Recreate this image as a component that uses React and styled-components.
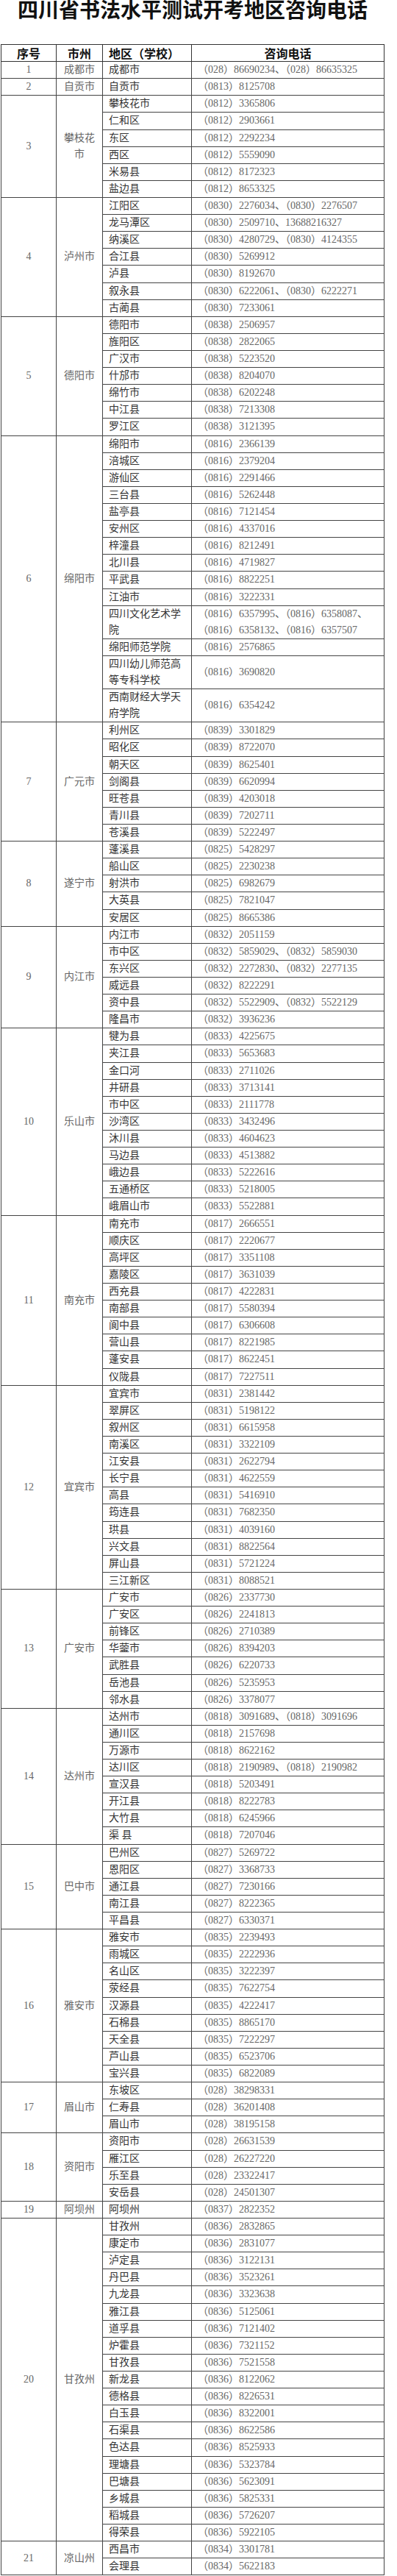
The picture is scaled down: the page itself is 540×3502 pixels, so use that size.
import styled, { createGlobalStyle } from "styled-components";

const GlobalStyle = createGlobalStyle`
  body {
    margin: 0;
    background: #fff;
  }
`;

const Page = styled.div`
  width: 522px;
  padding-left: 1px;
`;

const Title = styled.h1`
  margin: 0 0 35px;
  font-family: "Noto Sans CJK SC", sans-serif;
  font-size: 28px;
  line-height: 25px;
  font-weight: 700;
  color: #111;
  text-align: center;
  letter-spacing: 0;
`;

const Table = styled.table`
  width: 521px;
  border-collapse: collapse;
  table-layout: fixed;
`;

const HeadCell = styled.th`
  border: 1px solid #333;
  padding: 0 8px;
  font-family: "Noto Sans CJK SC", sans-serif;
  font-size: 16px;
  line-height: 22.11px;
  font-weight: 700;
  color: #111;
  text-align: ${(p) => (p.$left ? "left" : "center")};
`;

const Cell = styled.td`
  border: 1px solid #444;
  padding: 0 ${(p) => (p.$narrow ? "6px" : "8px")};
  font-family: "Liberation Serif", "Noto Sans CJK SC", serif;
  font-size: 14px;
  line-height: 22.11px;
  color: ${(p) => (p.$dark ? "#333" : "#666")};
  text-align: ${(p) => (p.$center ? "center" : "left")};
  vertical-align: middle;
  word-break: normal;
`;

const regions = [
  { no: 1, city: "成都市", rows: [["成都市", "（028）86690234、（028）86635325"]] },
  { no: 2, city: "自贡市", code: "0813", rows: [["自贡市", "8125708"]] },
  {
    no: 3,
    city: "攀枝花市",
    code: "0812",
    rows: [
      ["攀枝花市", "3365806"],
      ["仁和区", "2903661"],
      ["东区", "2292234"],
      ["西区", "5559090"],
      ["米易县", "8172323"],
      ["盐边县", "8653325"],
    ],
  },
  {
    no: 4,
    city: "泸州市",
    code: "0830",
    rows: [
      ["江阳区", "（0830）2276034、（0830）2276507"],
      ["龙马潭区", "（0830）2509710、13688216327"],
      ["纳溪区", "（0830）4280729、（0830）4124355"],
      ["合江县", "5269912"],
      ["泸县", "8192670"],
      ["叙永县", "（0830）6222061、（0830）6222271"],
      ["古蔺县", "7233061"],
    ],
  },
  {
    no: 5,
    city: "德阳市",
    code: "0838",
    rows: [
      ["德阳市", "2506957"],
      ["旌阳区", "2822065"],
      ["广汉市", "5223520"],
      ["什邡市", "8204070"],
      ["绵竹市", "6202248"],
      ["中江县", "7213308"],
      ["罗江区", "3121395"],
    ],
  },
  {
    no: 6,
    city: "绵阳市",
    code: "0816",
    rows: [
      ["绵阳市", "2366139"],
      ["涪城区", "2379204"],
      ["游仙区", "2291466"],
      ["三台县", "5262448"],
      ["盐亭县", "7121454"],
      ["安州区", "4337016"],
      ["梓潼县", "8212491"],
      ["北川县", "4719827"],
      ["平武县", "8822251"],
      ["江油市", "3222331"],
      ["四川文化艺术学院", "（0816）6357995、（0816）6358087、（0816）6358132、（0816）6357507"],
      ["绵阳师范学院", "2576865"],
      ["四川幼儿师范高等专科学校", "3690820"],
      ["西南财经大学天府学院", "6354242"],
    ],
  },
  {
    no: 7,
    city: "广元市",
    code: "0839",
    rows: [
      ["利州区", "3301829"],
      ["昭化区", "8722070"],
      ["朝天区", "8625401"],
      ["剑阁县", "6620994"],
      ["旺苍县", "4203018"],
      ["青川县", "7202711"],
      ["苍溪县", "5222497"],
    ],
  },
  {
    no: 8,
    city: "遂宁市",
    code: "0825",
    rows: [
      ["蓬溪县", "5428297"],
      ["船山区", "2230238"],
      ["射洪市", "6982679"],
      ["大英县", "7821047"],
      ["安居区", "8665386"],
    ],
  },
  {
    no: 9,
    city: "内江市",
    code: "0832",
    rows: [
      ["内江市", "2051159"],
      ["市中区", "（0832）5859029、（0832）5859030"],
      ["东兴区", "（0832）2272830、（0832）2277135"],
      ["威远县", "8222291"],
      ["资中县", "（0832）5522909、（0832）5522129"],
      ["隆昌市", "3936236"],
    ],
  },
  {
    no: 10,
    city: "乐山市",
    code: "0833",
    rows: [
      ["犍为县", "4225675"],
      ["夹江县", "5653683"],
      ["金口河", "2711026"],
      ["井研县", "3713141"],
      ["市中区", "2111778"],
      ["沙湾区", "3432496"],
      ["沐川县", "4604623"],
      ["马边县", "4513882"],
      ["峨边县", "5222616"],
      ["五通桥区", "5218005"],
      ["峨眉山市", "5522881"],
    ],
  },
  {
    no: 11,
    city: "南充市",
    code: "0817",
    rows: [
      ["南充市", "2666551"],
      ["顺庆区", "2220677"],
      ["高坪区", "3351108"],
      ["嘉陵区", "3631039"],
      ["西充县", "4222831"],
      ["南部县", "5580394"],
      ["阆中县", "6306608"],
      ["营山县", "8221985"],
      ["蓬安县", "8622451"],
      ["仪陇县", "7227511"],
    ],
  },
  {
    no: 12,
    city: "宜宾市",
    code: "0831",
    rows: [
      ["宜宾市", "2381442"],
      ["翠屏区", "5198122"],
      ["叙州区", "6615958"],
      ["南溪区", "3322109"],
      ["江安县", "2622794"],
      ["长宁县", "4622559"],
      ["高县", "5416910"],
      ["筠连县", "7682350"],
      ["珙县", "4039160"],
      ["兴文县", "8822564"],
      ["屏山县", "5721224"],
      ["三江新区", "8088521"],
    ],
  },
  {
    no: 13,
    city: "广安市",
    code: "0826",
    rows: [
      ["广安市", "2337730"],
      ["广安区", "2241813"],
      ["前锋区", "2710389"],
      ["华蓥市", "8394203"],
      ["武胜县", "6220733"],
      ["岳池县", "5235953"],
      ["邻水县", "3378077"],
    ],
  },
  {
    no: 14,
    city: "达州市",
    code: "0818",
    rows: [
      ["达州市", "（0818）3091689、（0818）3091696"],
      ["通川区", "2157698"],
      ["万源市", "8622162"],
      ["达川区", "（0818）2190989、（0818）2190982"],
      ["宣汉县", "5203491"],
      ["开江县", "8222783"],
      ["大竹县", "6245966"],
      ["渠 县", "7207046"],
    ],
  },
  {
    no: 15,
    city: "巴中市",
    code: "0827",
    rows: [
      ["巴州区", "5269722"],
      ["恩阳区", "3368733"],
      ["通江县", "7230166"],
      ["南江县", "8222365"],
      ["平昌县", "6330371"],
    ],
  },
  {
    no: 16,
    city: "雅安市",
    code: "0835",
    rows: [
      ["雅安市", "2239493"],
      ["雨城区", "2222936"],
      ["名山区", "3222397"],
      ["荥经县", "7622754"],
      ["汉源县", "4222417"],
      ["石棉县", "8865170"],
      ["天全县", "7222297"],
      ["芦山县", "6523706"],
      ["宝兴县", "6822089"],
    ],
  },
  {
    no: 17,
    city: "眉山市",
    code: "028",
    rows: [
      ["东坡区", "38298331"],
      ["仁寿县", "36201408"],
      ["眉山市", "38195158"],
    ],
  },
  {
    no: 18,
    city: "资阳市",
    code: "028",
    rows: [
      ["资阳市", "26631539"],
      ["雁江区", "26227220"],
      ["乐至县", "23322417"],
      ["安岳县", "24501307"],
    ],
  },
  { no: 19, city: "阿坝州", code: "0837", rows: [["阿坝州", "2822352"]] },
  {
    no: 20,
    city: "甘孜州",
    code: "0836",
    rows: [
      ["甘孜州", "2832865"],
      ["康定市", "2831077"],
      ["泸定县", "3122131"],
      ["丹巴县", "3523261"],
      ["九龙县", "3323638"],
      ["雅江县", "5125061"],
      ["道孚县", "7121402"],
      ["炉霍县", "7321152"],
      ["甘孜县", "7521558"],
      ["新龙县", "8122062"],
      ["德格县", "8226531"],
      ["白玉县", "8322001"],
      ["石渠县", "8622586"],
      ["色达县", "8525933"],
      ["理塘县", "5323784"],
      ["巴塘县", "5623091"],
      ["乡城县", "5825331"],
      ["稻城县", "5726207"],
      ["得荣县", "5922105"],
    ],
  },
  {
    no: 21,
    city: "凉山州",
    code: "0834",
    rows: [
      ["西昌市", "3301781"],
      ["会理县", "5622183"],
    ],
  },
];

const phoneText = (code, phone) => (phone.startsWith("（") ? phone : `（${code}）${phone}`);

const App = () => {
  return (
    <Page>
      <GlobalStyle />
      <Title>四川省书法水平测试开考地区咨询电话</Title>
      <Table>
        <colgroup>
          <col style={{ width: 75 }} />
          <col style={{ width: 63 }} />
          <col style={{ width: 121 }} />
          <col style={{ width: 262 }} />
        </colgroup>
        <thead>
          <tr>
            <HeadCell>序号</HeadCell>
            <HeadCell>市州</HeadCell>
            <HeadCell $left>地区（学校）</HeadCell>
            <HeadCell>咨询电话</HeadCell>
          </tr>
        </thead>
        <tbody>
          {regions.map((r) =>
            r.rows.map(([name, phone], i) => (
              <tr key={`${r.no}-${i}`}>
                {i === 0 && (
                  <Cell $center rowSpan={r.rows.length}>
                    {r.no}
                  </Cell>
                )}
                {i === 0 && (
                  <Cell $center $narrow rowSpan={r.rows.length}>
                    {r.city}
                  </Cell>
                )}
                <Cell $dark>{name}</Cell>
                <Cell>{phoneText(r.code, phone)}</Cell>
              </tr>
            ))
          )}
        </tbody>
      </Table>
    </Page>
  );
};

export default App;
